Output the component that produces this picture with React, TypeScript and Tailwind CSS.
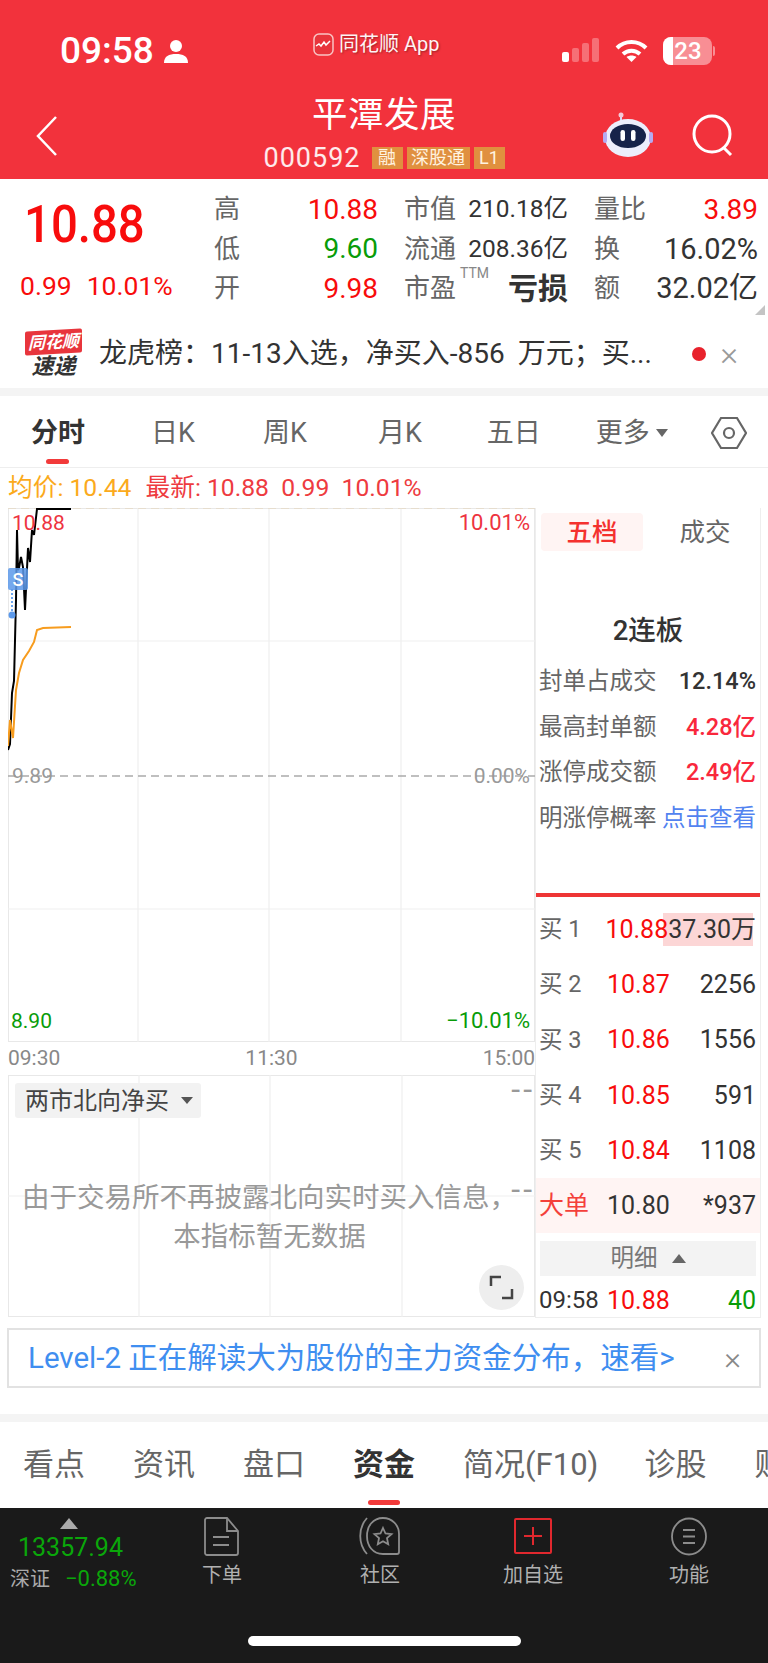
import type { ReactNode } from 'react'

const stats = [
  [
    { label: '高', value: '10.88', color: 'text-[#f80c0c] text-[28px]' },
    { label: '低', value: '9.60', color: 'text-[#089c08] text-[28px]' },
    { label: '开', value: '9.98', color: 'text-[#f80c0c] text-[28px]' },
  ],
  [
    { label: '市值', value: '210.18亿', color: 'text-[#333] text-[24.500px]' },
    { label: '流通', value: '208.36亿', color: 'text-[#333] text-[24.500px]' },
    { label: '市盈', value: '亏损', color: 'text-[#333] font-semibold text-[30px]' },
  ],
  [
    { label: '量比', value: '3.89', color: 'text-[#f80c0c] text-[28px]' },
    { label: '换', value: '16.02%', color: 'text-[#333] text-[29px]' },
    { label: '额', value: '32.02亿', color: 'text-[#333] text-[29px]' },
  ],
]

const seal = [
  { label: '封单占成交', value: '12.14%', color: 'text-[#333] font-medium' },
  { label: '最高封单额', value: '4.28亿', color: 'text-[#f9283c] font-medium' },
  { label: '涨停成交额', value: '2.49亿', color: 'text-[#f9283c] font-medium' },
  { label: '明涨停概率', value: '点击查看', color: 'text-[#5283f0]' },
]

const bids = [
  { label: '买', n: '1', price: '10.88', qty: '37.30万', bar: true },
  { label: '买', n: '2', price: '10.87', qty: '2256', bar: false },
  { label: '买', n: '3', price: '10.86', qty: '1556', bar: false },
  { label: '买', n: '4', price: '10.85', qty: '591', bar: false },
  { label: '买', n: '5', price: '10.84', qty: '1108', bar: false },
]

function StatusBar() {
  return (
    <div className="relative h-[84px] text-white">
      <div className="absolute left-[60px] top-[30px] flex items-center gap-[10px]">
        <span className="text-[37px] font-medium leading-[42px]">09:58</span>
        <svg width="24" height="24" viewBox="0 0 24 24" fill="white">
          <circle cx="12" cy="7" r="6" />
          <path d="M0 24c0-7 5-9 12-9s12 2 12 9z" />
        </svg>
      </div>
      <div className="absolute left-[313px] top-[31px] flex items-center gap-[5px] [text-shadow:1px_1px_2px_rgba(0,0,0,0.35)]">
        <svg width="21" height="23" viewBox="0 0 21 23">
          <rect x="1" y="1" width="19" height="21" rx="5" fill="#e8343c" stroke="#f9c4c4" strokeWidth="1.5" />
          <path d="M3 13l3-2 2 2 3-4 2 3 4-4" fill="none" stroke="white" strokeWidth="1.5" />
        </svg>
        <span className="text-[20px] leading-[26px] opacity-95">同花顺 App</span>
      </div>
      <div className="absolute left-[562px] top-[38px] flex items-end gap-[3px]">
        <span className="h-[10px] w-[7px] rounded-[2px] bg-white" />
        <span className="h-[14px] w-[7px] rounded-[2px] bg-white/30" />
        <span className="h-[19px] w-[7px] rounded-[2px] bg-white/30" />
        <span className="h-[24px] w-[7px] rounded-[2px] bg-white/30" />
      </div>
      <svg className="absolute left-[615px] top-[39px]" width="33" height="24" viewBox="0 0 33 24" fill="none" stroke="white" strokeWidth="4">
        <path d="M2 9c8-8 21-8 29 0" />
        <path d="M8 15c5-4.500 12-4.500 17 0" />
        <path d="M16.500 23l-5-5c3-2 7-2 10 0z" fill="white" stroke="none" />
      </svg>
      <div className="absolute left-[663px] top-[37px] flex items-center">
        <div className="relative h-[28px] w-[49px] overflow-hidden rounded-[8px] bg-white/45">
          <div className="h-full w-[10px] bg-white" />
          <span className="absolute inset-0 pl-[1px] text-center text-[24px] font-medium leading-[28px] text-white">23</span>
        </div>
        <span className="ml-[1px] h-[10px] w-[2px] rounded-r bg-white/45" />
      </div>
    </div>
  )
}

function Header() {
  return (
    <header className="h-[179px] bg-[#f2323c] text-white">
      <StatusBar />
      <div className="relative pt-[9px]">
        <svg className="absolute left-[35px] top-[31px]" width="24" height="42" viewBox="0 0 24 42" fill="none" stroke="white" strokeWidth="2.5">
          <path d="M21 2L3 21l18 19" />
        </svg>
        <div className="flex flex-col items-center">
          <h1 className="text-[35.500px] font-normal leading-[44px] tracking-[0.5px]">平潭发展</h1>
          <div className="mt-[6px] flex items-center">
            <span className="mr-[11px] text-[27px] leading-[30px] tracking-[1px] text-white/90">000592</span>
            <div className="flex gap-[4px] text-[18px] leading-[22px] text-[#fff3e0]">
              <span className="w-[31px] bg-[#e0903f] text-center">融</span>
              <span className="w-[63px] bg-[#e0903f] text-center">深股通</span>
              <span className="w-[31px] bg-[#e0903f] text-center">L1</span>
            </div>
          </div>
        </div>
        <svg className="absolute left-[603px] top-[28px]" width="50" height="46" viewBox="0 0 50 46">
          <circle cx="18" cy="3" r="2.500" fill="#f4c9d8" />
          <path d="M18 5v5" stroke="#d8d8f5" strokeWidth="2" />
          <ellipse cx="25" cy="26" rx="23" ry="19" fill="#eceefc" />
          <rect x="0" y="20" width="4" height="11" rx="2" fill="#b5abf2" />
          <rect x="46" y="20" width="4" height="11" rx="2" fill="#b5abf2" />
          <ellipse cx="25" cy="24" rx="18" ry="12" fill="#16234a" />
          <rect x="17.500" y="18" width="4.500" height="11" rx="2.200" fill="white" />
          <rect x="28" y="18" width="4.500" height="11" rx="2.200" fill="white" />
        </svg>
        <svg className="absolute left-[691px] top-[29px]" width="44" height="44" viewBox="0 0 44 44" fill="none" stroke="white" strokeWidth="3">
          <circle cx="21" cy="21" r="18" />
          <path d="M33 35l7 7" />
        </svg>
      </div>
    </header>
  )
}

function QuoteStrip() {
  return (
    <section className="relative flex h-[138px] bg-white">
      <div className="w-[214px] pl-[24px] pt-[15px] text-[#f80c0c]">
        <div className="origin-left scale-x-[0.91] text-[52px] font-medium leading-[62px]">10.88</div>
        <div className="ml-[-4px] mt-[14px] flex gap-[15px] text-[26.500px] leading-[32px]">
          <span>0.99</span>
          <span>10.01%</span>
        </div>
      </div>
      <div className="flex gap-[26px] pt-[11px]">
        {stats.map((col, i) => (
          <div key={i} className="w-[164px]">
            {col.map((s) => (
              <div key={s.label} className="flex h-[39.500px] items-center justify-between text-[26px] text-[#666]">
                <span className="relative">
                  {s.label}
                  {s.label === '市盈' && (
                    <span className="absolute left-[56px] top-[-6px] text-[14px] leading-[20px] text-[#888]">TTM</span>
                  )}
                </span>
                <span className={s.color}>{s.value}</span>
              </div>
            ))}
          </div>
        ))}
      </div>
      <span className="absolute bottom-[2px] right-[3px] h-0 w-0 border-b-[10px] border-l-[10px] border-b-[#c4c4c4] border-l-transparent" />
    </section>
  )
}

function Ticker() {
  return (
    <section className="mt-[3px] flex h-[68px] items-center bg-white pl-[25px] pr-[30px]">
      <div className="flex w-[57px] flex-col items-center italic leading-none">
        <span className="flex h-[24px] w-[57px] -skew-y-3 items-center justify-center rounded-[2px] bg-[#e8353c] text-[17px] font-bold text-white">同花顺</span>
        <span className="mt-[2px] text-[22px] font-bold text-[#333]">速递</span>
      </div>
      <span className="ml-[17px] flex-1 whitespace-nowrap text-[28px] leading-[34px] text-[#333]">
        龙虎榜：11-13入选，净买入<span className="mr-[13px]">-856</span>万元；买...
      </span>
      <span className="h-[14px] w-[14px] rounded-full bg-[#e8222c]" />
      <span className="mb-[3px] ml-[14px] text-[34px] font-light leading-[34px] text-[#999]">×</span>
    </section>
  )
}

function PeriodTabs() {
  return (
    <nav className="relative mt-[8px] flex h-[72px] items-center gap-[68px] border-b border-[#eee] bg-white pl-[31px] pt-[3px] text-[27px] text-[#666]">
      <span className="font-semibold text-[#333]">分时</span>
      <span className="ml-[-2px]">日K</span>
      <span>周K</span>
      <span className="ml-[3px]">月K</span>
      <span className="ml-[-3px]">五日</span>
      <span className="ml-[-13px] flex items-center gap-[6px]">
        更多
        <span className="h-0 w-0 border-x-[6px] border-t-[8px] border-x-transparent border-t-[#666]" />
      </span>
      <svg className="absolute left-[711px] top-[19px]" width="36" height="36" viewBox="0 0 36 36" fill="none" stroke="#666" strokeWidth="2.200">
        <path d="M10 3h16l9 15-9 15H10L1 18z" />
        <circle cx="18" cy="18" r="5" />
      </svg>
      <span className="absolute bottom-[3px] left-[46px] h-[5px] w-[23px] rounded-full bg-[#f23a3a]" />
    </nav>
  )
}

function PriceChart() {
  return (
    <div className="relative h-[534px]">
      <svg className="absolute inset-0" width="527" height="534" viewBox="0 0 527 534" fill="none">
        <rect x="0.500" y="0.500" width="526" height="533" stroke="#e8e8e8" />
        <path d="M130 0v534M261 0v534M393 0v534M0 133h527M0 401h527" stroke="#efefef" strokeWidth="1.200" />
        <path d="M0 0h527" stroke="#e3d2b4" strokeWidth="1.200" strokeDasharray="8 5" />
        <path d="M0 268h527" stroke="#aaa" strokeWidth="1.500" strokeDasharray="8 5" />
        <polyline
          points="0,242 2,236 4,185 6,173 8,92 9,22 10,62 11,60 13,49 15,59 17,102 20,40 22,54 24,22 26,27 29,1 63,1"
          stroke="#000"
          strokeWidth="2"
        />
        <polyline
          points="0,238 2,212 5,230 8,182 11,165 15,152 21,143 26,134 29,122 35,120 63,119"
          stroke="#f79c1e"
          strokeWidth="2"
        />
        <path d="M4 81v24" stroke="#6ea6ee" strokeWidth="2" strokeDasharray="2 2" />
        <circle cx="4" cy="107" r="3.500" fill="#5c99ea" />
      </svg>
      <span className="absolute left-[4px] top-[2px] text-[21px] leading-[26px] text-[#ee3340]">10.88</span>
      <span className="absolute right-[5px] top-[2px] text-[22px] leading-[26px] text-[#ee3340]">10.01%</span>
      <span className="absolute left-0 top-[60px] flex h-[22px] w-[20px] items-center justify-center rounded-[2px] bg-[#5c99ea]/85 text-[18px] font-medium text-white">S</span>
      <span className="absolute left-[4px] top-[255px] text-[21px] leading-[26px] text-[#999]">9.89</span>
      <span className="absolute right-[5px] top-[255px] text-[21px] leading-[26px] text-[#999]">0.00%</span>
      <span className="absolute bottom-[8px] left-[3px] text-[21px] leading-[26px] text-[#089c08]">8.90</span>
      <span className="absolute bottom-[8px] right-[5px] text-[22px] leading-[26px] text-[#089c08]">−10.01%</span>
    </div>
  )
}

function FlowChart() {
  return (
    <div className="relative h-[242px]">
      <svg className="absolute inset-0" width="527" height="242" viewBox="0 0 527 242" fill="none">
        <rect x="0.500" y="0.500" width="526" height="241" stroke="#e8e8e8" />
        <path d="M131 0v242M262 0v242M394 0v242M0 121h527" stroke="#efefef" strokeWidth="1.200" />
      </svg>
      <div className="absolute left-[7px] top-[8px] flex h-[35px] w-[186px] items-center gap-[12px] rounded-[3px] bg-[#f2f2f2] pl-[10px] text-[24px] text-[#444]">
        两市北向净买
        <span className="h-0 w-0 border-x-[6px] border-t-[7px] border-x-transparent border-t-[#555]" />
      </div>
      <span className="absolute right-[0px] top-[3px] text-[32px] leading-[22px] tracking-[3px] text-[#999]">--</span>
      <span className="absolute right-[0px] top-[103px] text-[32px] leading-[22px] tracking-[3px] text-[#999]">--</span>
      <p className="absolute left-[-2px] top-[103px] w-[527px] text-center text-[27.500px] leading-[39px] text-[#999]">
        由于交易所不再披露北向实时买入信息，
        <br />
        本指标暂无数据
      </p>
      <div className="absolute left-[471px] top-[190px] flex h-[45px] w-[45px] items-center justify-center rounded-full bg-[#eee]">
        <svg width="25" height="25" viewBox="0 0 25 25" fill="none" stroke="#444" strokeWidth="2.500">
          <path d="M2 11V2h10M23 14v9H13" />
        </svg>
      </div>
    </div>
  )
}

function OrderPanel() {
  return (
    <aside className="h-[810px] w-[226px] border-x border-b border-[#eee] bg-white">
      <div className="flex h-[47px] items-start pt-[5px] text-[25.500px] leading-[38px]">
        <span className="ml-[5px] w-[102px] rounded-[4px] bg-[#fff4f3] text-center font-medium text-[#f4312e]">五档</span>
        <span className="ml-[21px] w-[82px] text-center text-[#666]">成交</span>
      </div>
      <div className="pt-[58px]">
        <div className="text-center text-[27.500px] font-medium leading-[36px] text-[#333]">2连板</div>
        <div className="mt-[10px]">
          {seal.map((r) => (
            <div key={r.label} className="flex h-[45.500px] items-center justify-between pl-[3px] pr-[4px] text-[23.500px]">
              <span className="text-[#666]">{r.label}</span>
              <span className={r.color}>{r.value}</span>
            </div>
          ))}
        </div>
      </div>
      <div className="mt-[52px] h-[4px] bg-[#ee3535]" />
      <div className="pt-[5px]">
        {bids.map((b) => (
          <div key={b.n} className="relative flex h-[55.300px] items-center pl-[3px] pr-[4px] text-[25px]">
            <span className="w-[68px] text-[23.500px] text-[#666]">
              {b.label} {b.n}
            </span>
            <span className="relative z-10 text-[#f80c0c]">{b.price}</span>
            <span className="relative ml-auto whitespace-nowrap">
              {b.bar && <span className="absolute bottom-[2px] left-[-5px] right-[3px] top-[2px] bg-[#fcd6d6]" />}
              <span className="relative text-[#333]">{b.qty}</span>
            </span>
          </div>
        ))}
        <div className="flex h-[55px] items-center bg-[#fff4f3] pl-[3px] pr-[4px] text-[25px]">
          <span className="w-[68px] text-[#f4403a]">大单</span>
          <span className="text-[#333]">10.80</span>
          <span className="ml-auto text-[#333]">*937</span>
        </div>
      </div>
      <div className="mx-[4px] mt-[8px] flex h-[35px] items-center justify-center gap-[14px] bg-[#f3f3f3] text-[23.500px] text-[#777]">
        明细
        <span className="h-0 w-0 border-x-[7px] border-b-[9px] border-x-transparent border-b-[#666]" />
      </div>
      <div className="flex h-[48px] items-center pl-[3px] pr-[4px] text-[25px]">
        <span className="w-[68px] text-[24px] text-[#333]">09:58</span>
        <span className="text-[#f80c0c]">10.88</span>
        <span className="ml-auto text-[#089c08]">40</span>
      </div>
    </aside>
  )
}

function Banner() {
  return (
    <div className="mx-[7px] mt-[10px] flex h-[60px] w-[754px] items-center border-2 border-[#e2e2e2] pl-[19px] pr-[18px]">
      <span className="flex-1 whitespace-nowrap text-[29.500px] text-[#3f8ef0]">Level-2 正在解读大为股份的主力资金分布，速看&gt;</span>
      <span className="text-[32px] font-light leading-[34px] text-[#888]">×</span>
    </div>
  )
}

function NavItem({ icon, label }: { icon: ReactNode; label: string }) {
  return (
    <div className="absolute top-[9px] flex w-[80px] flex-col items-center text-[20px] text-[#b0b0b0]">
      {icon}
      <span className="mt-[6px] leading-[26px]">{label}</span>
    </div>
  )
}

function BottomBar() {
  return (
    <footer className="relative h-[156px] overflow-hidden bg-[#1a1a1a]">
      <div className="absolute left-[10px] top-[10px] w-[130px]">
        <span className="ml-[50px] block h-0 w-0 border-x-[9px] border-b-[11px] border-x-transparent border-b-[#aaa]" />
        <div className="ml-[8px] mt-[4px] text-[25px] leading-[30px] text-[#0aa70a]">13357.94</div>
        <div className="mt-[3px] flex items-center gap-[15px]">
          <span className="text-[20px] leading-[26px] text-[#aaa]">深证</span>
          <span className="text-[22px] leading-[26px] text-[#0aa70a]">−0.88%</span>
        </div>
      </div>
      <div className="left-[182px] top-0 absolute">
        <NavItem
          label="下单"
          icon={
            <svg width="36" height="39" viewBox="0 0 36 39" fill="none" stroke="#8c8c8c" strokeWidth="1.800">
              <path d="M3 1h20l11 13v22a2 2 0 0 1-2 2H3a2 2 0 0 1-2-2V3a2 2 0 0 1 2-2z" />
              <path d="M23 1v13h11M9 20h16M9 28h16" />
            </svg>
          }
        />
      </div>
      <div className="left-[340px] top-0 absolute">
        <NavItem
          label="社区"
          icon={
            <svg width="42" height="39" viewBox="0 0 42 39" fill="none" stroke="#8c8c8c" strokeWidth="1.800">
              <path d="M8 37C-1 27-1 11 8 1" />
              <path d="M24 1c9 0 16 7 16 16v18a2 2 0 0 1-2 2H24C14 37 8 29 8 19S14 1 24 1z" />
              <path d="M24 11l2.500 5.500 6 .7-4.500 4 1.200 6-5.200-3-5.200 3 1.200-6-4.500-4 6-.7z" />
            </svg>
          }
        />
      </div>
      <div className="left-[493px] top-0 absolute">
        <NavItem
          label="加自选"
          icon={
            <svg width="38" height="39" viewBox="0 0 38 39" fill="none" stroke="#e0282e" strokeWidth="2">
              <rect x="1" y="2" width="36" height="34" rx="1" />
              <path d="M19 10v18M10 19h18" />
            </svg>
          }
        />
      </div>
      <div className="left-[649px] top-0 absolute">
        <NavItem
          label="功能"
          icon={
            <svg width="36" height="39" viewBox="0 0 36 39" fill="none" stroke="#8c8c8c" strokeWidth="1.800">
              <ellipse cx="18" cy="19.500" rx="17" ry="18" />
              <path d="M12 13h12M12 19.500h12M12 26h12" strokeWidth="2.200" />
            </svg>
          }
        />
      </div>
      <span className="absolute left-[248px] top-[128px] h-[10px] w-[273px] rounded-full bg-white" />
    </footer>
  )
}

export default function App() {
  return (
    <div className="h-[1663px] w-[768px] overflow-hidden bg-white font-['Roboto','Noto_Sans_CJK_SC',sans-serif]">
      <Header />
      <QuoteStrip />
      <div className="bg-[#f4f4f4]">
        <Ticker />
        <PeriodTabs />
      </div>
      <div className="flex">
        <div className="w-[535px] pl-[8px]">
          <div className="flex h-[40px] items-center gap-[14px] text-[24.700px]">
            <span className="text-[#fbaa1c]">均价: 10.44</span>
            <span className="whitespace-pre text-[#ee3b40]">最新: 10.88  0.99  10.01%</span>
          </div>
          <PriceChart />
          <div className="flex h-[33px] items-center justify-between text-[21px] text-[#888]">
            <span>09:30</span>
            <span>11:30</span>
            <span>15:00</span>
          </div>
          <FlowChart />
        </div>
        <div className="pt-[40px]">
          <OrderPanel />
        </div>
      </div>
      <Banner />
      <div className="mt-[26px] h-[8px] bg-[#f4f4f4]" />
      <nav className="relative flex h-[86px] items-center gap-[48px] overflow-hidden whitespace-nowrap pl-[23px] pt-[1px] text-[31px] text-[#666]">
        <span>看点</span>
        <span>资讯</span>
        <span>盘口</span>
        <span className="font-semibold text-[#333]">资金</span>
        <span>简况(F10)</span>
        <span className="ml-[-2px]">诊股</span>
        <span>财务</span>
        <span className="absolute bottom-[3px] left-[368px] h-[5px] w-[32px] rounded-full bg-[#f23a3a]" />
      </nav>
      <BottomBar />
    </div>
  )
}
